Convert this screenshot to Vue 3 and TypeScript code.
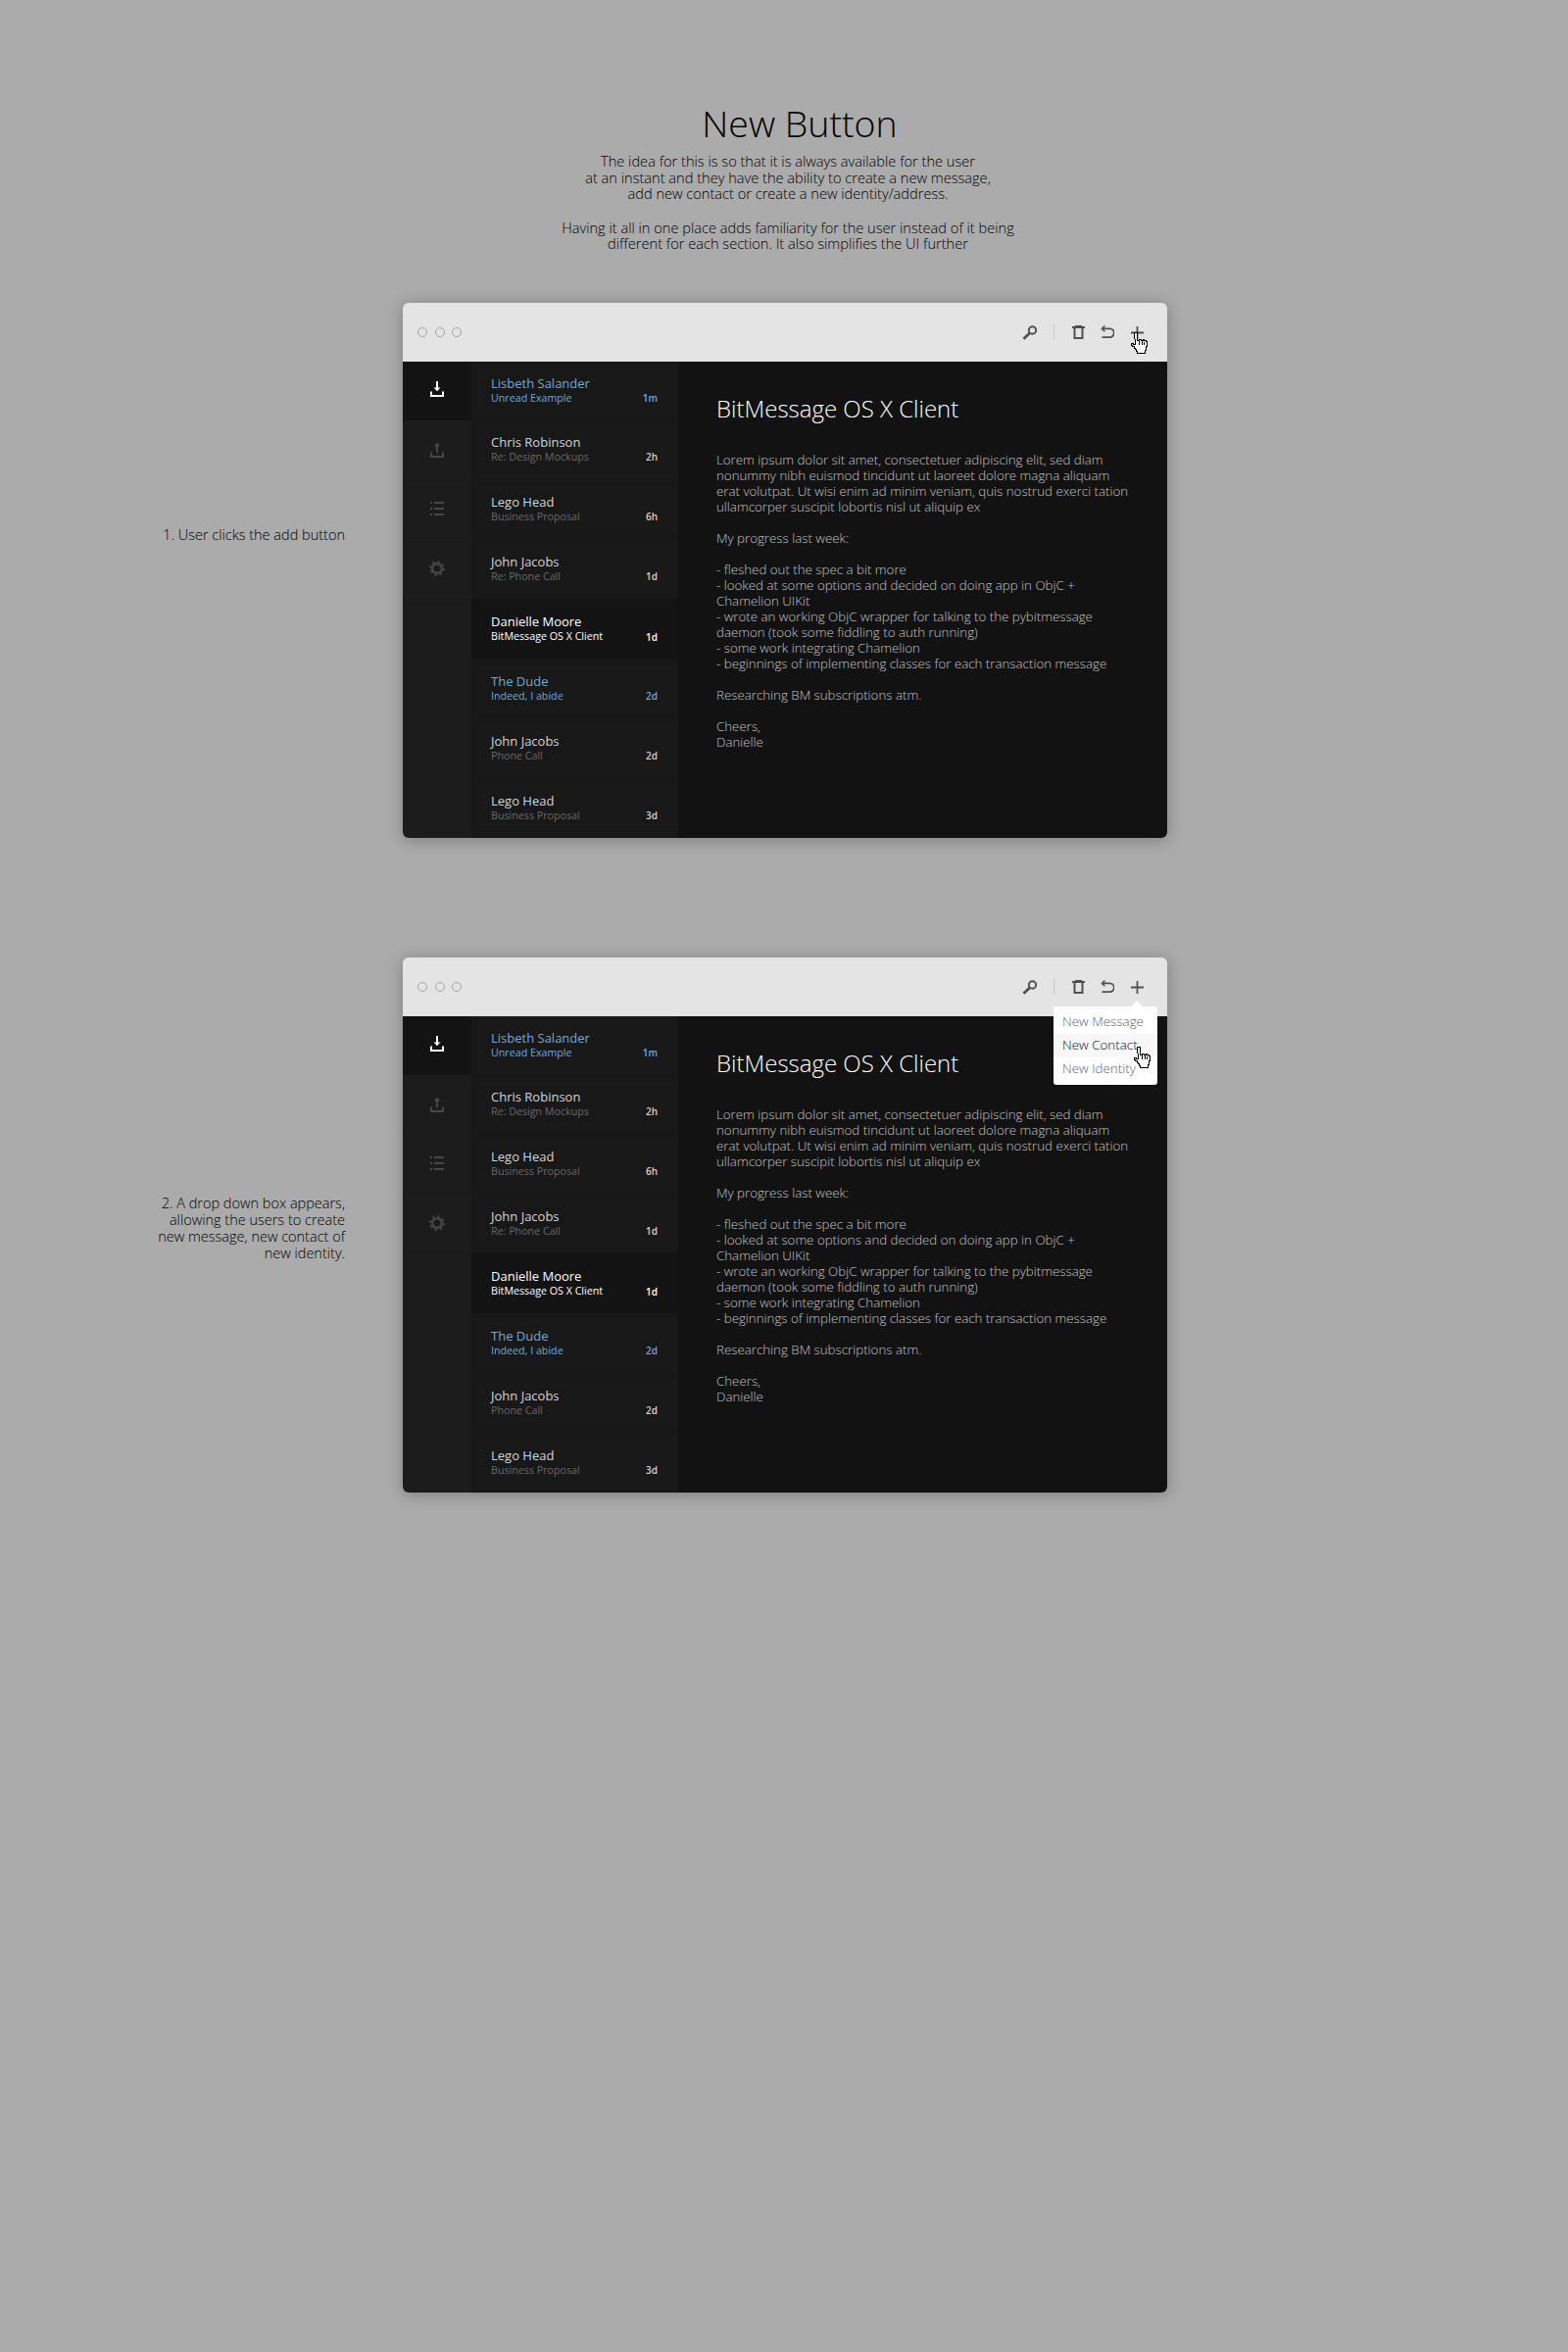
<script setup lang="ts">
interface Message {
  name: string;
  subject: string;
  time: string;
  kind?: 'unread' | 'selected';
}

interface Step {
  note: string[];
  noteTop: number;
  showMenu: boolean;
}

const messages: Message[] = [
  { name: 'Lisbeth Salander', subject: 'Unread Example', time: '1m', kind: 'unread' },
  { name: 'Chris Robinson', subject: 'Re: Design Mockups', time: '2h' },
  { name: 'Lego Head', subject: 'Business Proposal', time: '6h' },
  { name: 'John Jacobs', subject: 'Re: Phone Call', time: '1d' },
  { name: 'Danielle Moore', subject: 'BitMessage OS X Client', time: '1d', kind: 'selected' },
  { name: 'The Dude', subject: 'Indeed, I abide', time: '2d', kind: 'unread' },
  { name: 'John Jacobs', subject: 'Phone Call', time: '2d' },
  { name: 'Lego Head', subject: 'Business Proposal', time: '3d' },
];

const steps: Step[] = [
  { note: ['1. User clicks the add button'], noteTop: 228, showMenu: false },
  {
    note: [
      '2. A drop down box appears,',
      'allowing the users to create',
      'new message, new contact of',
      'new identity.',
    ],
    noteTop: 242,
    showMenu: true,
  },
];

const bodyText = `Lorem ipsum dolor sit amet, consectetuer adipiscing elit, sed diam
nonummy nibh euismod tincidunt ut laoreet dolore magna aliquam
erat volutpat. Ut wisi enim ad minim veniam, quis nostrud exerci tation
ullamcorper suscipit lobortis nisl ut aliquip ex

My progress last week:

- fleshed out the spec a bit more
- looked at some options and decided on doing app in ObjC +
Chamelion UIKit
- wrote an working ObjC wrapper for talking to the pybitmessage
daemon (took some fiddling to auth running)
- some work integrating Chamelion
- beginnings of implementing classes for each transaction message

Researching BM subscriptions atm.

Cheers,
Danielle`;
</script>

<template>
  <main class="page">
    <header class="intro">
      <h1>New Button</h1>
      <p>
        The idea for this is so that it is always available for the user<br />
        at an instant and they have the ability to create a new message,<br />
        add new contact or create a new identity/address.
      </p>
      <p>
        Having it all in one place adds familiarity for the user instead of it being<br />
        different for each section. It also simplifies the UI further
      </p>
    </header>

    <section v-for="(step, index) in steps" :key="index" class="step">
      <div class="note" :style="{ paddingTop: step.noteTop + 'px' }">
        <div v-for="line in step.note" :key="line">{{ line }}</div>
      </div>

      <div class="window">
        <div class="toolbar">
          <div class="dots"><i></i><i></i><i></i></div>
          <div class="actions">
            <span class="action">
              <svg width="16" height="15" viewBox="0 0 16 15" fill="none" stroke="#505050">
                <circle cx="10.500" cy="5" r="3.700" stroke-width="2" />
                <path d="M7.600 7.900 1.500 13.800" stroke-width="2.800" />
              </svg>
            </span>
            <span class="divider"></span>
            <span class="action">
              <svg width="13" height="14" viewBox="0 0 13 14" fill="none" stroke="#505050" stroke-width="2">
                <path d="M0 2h13" />
                <path d="M3.500 1.500V.5h6v1" stroke-width="1.200" />
                <path d="M2.500 3v10h8V3" />
              </svg>
            </span>
            <span class="action">
              <svg width="14" height="14" viewBox="0 0 14 14" fill="none" stroke="#505050" stroke-width="1.800">
                <path d="M2 3.400h7.400a3.800 3.800 0 0 1 0 8.800H1.500" />
                <path d="M4.400 .6 1.400 3.400l3 2.800" stroke-width="1.500" />
              </svg>
            </span>
            <span class="action">
              <svg width="13" height="13" viewBox="0 0 13 13" fill="none" stroke="#505050" stroke-width="1.800">
                <path d="M6.500 0v13M0 6.500h13" />
              </svg>
            </span>
          </div>

          <svg v-if="!step.showMenu" class="hand hand-toolbar" width="18" height="23" viewBox="0 0 18 23" shape-rendering="crispEdges">
            <path fill="#fff" stroke="#000" d="M4.500 .5h3v8h2v-1h2v1h2v-1h1v1h2v1h1v5h-1v4h-1v3h-8v-2h-1v-2h-1v-1h-1v-2h-2v-1h-1v-2h2v1h2z" />
            <path fill="none" stroke="#000" d="M9.500 8.500v4M12.500 8.500v4M14.500 9.500v3" />
          </svg>

          <div v-if="step.showMenu" class="menu">
            <div class="menu-item">New Message</div>
            <div class="menu-item active">New Contact</div>
            <div class="menu-item">New Identity</div>
            <svg class="hand hand-menu" width="18" height="23" viewBox="0 0 18 23" shape-rendering="crispEdges">
              <path fill="#fff" stroke="#000" d="M4.500 .5h3v8h2v-1h2v1h2v-1h1v1h2v1h1v5h-1v4h-1v3h-8v-2h-1v-2h-1v-1h-1v-2h-2v-1h-1v-2h2v1h2z" />
              <path fill="none" stroke="#000" d="M9.500 8.500v4M12.500 8.500v4M14.500 9.500v3" />
            </svg>
          </div>
        </div>

        <div class="body">
          <nav class="sidebar">
            <div class="nav-cell current">
              <svg width="14" height="16" viewBox="0 0 14 16" fill="none" stroke="#fff" stroke-width="2">
                <path d="M7 0v8" />
                <path d="M3.600 6.400h6.800L7 10.200z" fill="#fff" stroke="none" />
                <path d="M1 10.500V15h12v-4.500" />
              </svg>
            </div>
            <div class="nav-cell">
              <svg width="14" height="16" viewBox="0 0 14 16" fill="none" stroke="#464646" stroke-width="2">
                <path d="M7 11V3" />
                <path d="M3.600 4.400h6.800L7 .6z" fill="#464646" stroke="none" />
                <path d="M1 10.500V15h12v-4.500" />
              </svg>
            </div>
            <div class="nav-cell">
              <svg width="14" height="14" viewBox="0 0 14 14" fill="none" stroke="#464646" stroke-width="2">
                <path d="M0 1h2M4 1h10M0 7h2M4 7h10M0 13h2M4 13h10" />
              </svg>
            </div>
            <div class="nav-cell">
              <svg width="16" height="16" viewBox="0 0 16 16" fill="none" stroke="#464646">
                <circle cx="8" cy="8" r="4.800" stroke-width="2.400" />
                <circle cx="8" cy="8" r="6.800" stroke-width="2" stroke-dasharray="2.700 2.640" />
              </svg>
            </div>
          </nav>

          <ul class="list">
            <li v-for="(message, row) in messages" :key="row" class="row" :class="message.kind">
              <div class="row-text">
                <div class="name">{{ message.name }}</div>
                <div class="subject">{{ message.subject }}</div>
              </div>
              <span class="time">{{ message.time }}</span>
            </li>
          </ul>

          <article class="reader">
            <h2>BitMessage OS X Client</h2>
            <p>{{ bodyText }}</p>
          </article>
        </div>
      </div>
    </section>
  </main>
</template>

<style>
html,
body {
  margin: 0;
  background: #ababab;
}
</style>

<style scoped>
.page {
  box-sizing: border-box;
  height: 2400px;
  overflow: hidden;
  background: #ababab;
  font-family: "Open Sans", "Liberation Sans", sans-serif;
  color: #000;
  /* keeps text antialiasing grey instead of LCD */
  opacity: 0.999;
}

.intro {
  box-sizing: border-box;
  height: 309px;
  padding-top: 102px;
  text-align: center;
}

.intro h1 {
  margin: 0 0 6px 32px;
  font-size: 37.500px;
  line-height: 48px;
  font-weight: 300;
}

.intro p {
  margin: 0 0 18px 8px;
  font-size: 14.600px;
  line-height: 16.500px;
  font-weight: 300;
}

.step {
  display: flex;
  align-items: flex-start;
  height: 668px;
}

.note {
  box-sizing: border-box;
  width: 352px;
  margin-right: 59px;
  text-align: right;
  font-size: 14.500px;
  line-height: 17px;
  font-weight: 300;
}

.window {
  width: 780px;
  height: 546px;
  border-radius: 6px;
  box-shadow: 0 2px 16px rgba(0, 0, 0, 0.28);
}

.toolbar {
  position: relative;
  display: flex;
  align-items: center;
  justify-content: space-between;
  height: 60px;
  padding: 0 16px 0 15px;
  box-sizing: border-box;
  background: #e4e4e4;
  border-radius: 6px 6px 0 0;
}

.dots {
  display: flex;
  gap: 7.500px;
}

.dots i {
  box-sizing: border-box;
  width: 10px;
  height: 10px;
  border: 1px solid #a5a5a5;
  border-radius: 50%;
}

.actions {
  display: flex;
  align-items: center;
}

.action {
  display: flex;
  align-items: center;
  justify-content: center;
  width: 30px;
  height: 30px;
}

.divider {
  width: 1px;
  height: 16px;
  margin: 0 9px;
  background: #c8c8c8;
}

.hand {
  position: absolute;
}

.hand-toolbar {
  top: 30px;
  right: 20px;
}

.menu {
  position: absolute;
  top: 50px;
  right: 10px;
  z-index: 2;
  width: 106px;
  padding: 4px 0;
  background: #fff;
  border-radius: 3px;
}

.menu::before {
  content: "";
  position: absolute;
  top: -6px;
  right: 15px;
  border-left: 6px solid transparent;
  border-right: 6px solid transparent;
  border-bottom: 6px solid #fff;
}

.menu-item {
  height: 24px;
  padding-left: 9px;
  font-size: 13.400px;
  line-height: 23px;
  font-weight: 300;
  color: #666;
}

.menu-item.active {
  background: #f7f7f7;
  color: #111;
}

.hand-menu {
  top: 41px;
  right: 7px;
}

.body {
  display: flex;
  height: 486px;
  border-radius: 0 0 6px 6px;
  overflow: hidden;
}

.sidebar,
.list {
  display: grid;
  grid-template-rows: 60px 60px 61px 61px 62px 60px 61px 61px;
}

.sidebar {
  width: 70px;
  background: #1c1c1c;
}

.nav-cell {
  display: flex;
  align-items: center;
  justify-content: center;
  box-sizing: border-box;
  border-bottom: 1px solid #191919;
}

.nav-cell.current {
  padding-bottom: 4px;
  background: #131313;
  border-bottom-color: #131313;
}

.list {
  width: 211px;
  margin: 0;
  padding: 0;
  list-style: none;
  background: #181818;
}

.row {
  display: flex;
  align-items: center;
  justify-content: space-between;
  box-sizing: border-box;
  padding: 0 21px 0 20px;
  border-bottom: 1px solid #161616;
  color: #d4d4d4;
}

.row-text {
  min-width: 0;
}

.name {
  font-size: 13px;
  line-height: 15px;
  font-weight: 400;
}

.subject {
  font-size: 10.700px;
  line-height: 14px;
  font-weight: 400;
  color: #686868;
}

.time {
  align-self: flex-end;
  margin-bottom: 15px;
  font-size: 10px;
  line-height: 14px;
  font-weight: 600;
  color: #d4d4d4;
}

.row.unread .name,
.row.unread .subject,
.row.unread .time {
  color: #6fa9dc;
}

.row.selected {
  background: #131313;
}

.row.selected .name,
.row.selected .subject,
.row.selected .time {
  color: #fff;
}

.reader {
  flex: 1;
  padding: 30px 0 0 39px;
  background: #121212;
  color: #c4c4c4;
}

.reader h2 {
  margin: 0 0 26px;
  font-size: 24px;
  line-height: 36px;
  font-weight: 300;
  color: #fff;
}

.reader p {
  margin: 0;
  font-size: 13.300px;
  line-height: 16px;
  font-weight: 300;
  white-space: pre-line;
}
</style>
